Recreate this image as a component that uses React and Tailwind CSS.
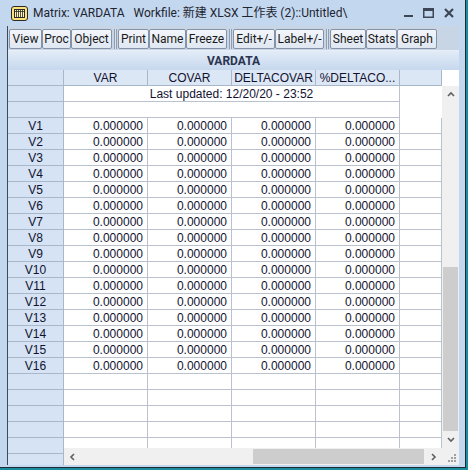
const GRID = 'border-[#b9c2cd]';

const colWidths = ['w-[84px]', 'w-[84px]', 'w-[84px]', 'w-[84px]'];

const MatrixIcon = () => (
  <svg width="17" height="15" viewBox="0 0 17 15" className="shrink-0">
    <rect x="0.5" y="0.5" width="16" height="14" rx="2.5" fill="#fbe27a" stroke="#2a2a2a" />
    <rect x="3.5" y="3.5" width="10" height="8" fill="#fff3b8" stroke="#2a2a2a" />
    <path d="M5.5 4v7M7.5 4v7M9.5 4v7M11.5 4v7M4 5.5h9" stroke="#2a2a2a" strokeWidth="0.8" />
  </svg>
);

const ToolButton = ({ label, w }) => (
  <div
    className={`${w} h-[20px] shrink-0 flex items-center justify-center border border-[#8593a8] rounded-[2px] bg-gradient-to-b from-[#f3f6fb] to-[#dfe7f2] text-[12px] text-[#1a1a1a]`}
  >
    {label}
  </div>
);

const Sep = () => (
  <div className="w-[6px] h-[20px] shrink-0 flex justify-center">
    <div className="w-[3px] h-full border-x border-[#8f9db0] bg-[#d9e2ee]" />
  </div>
);

const Chevron = ({ dir }) => {
  const pts = {
    up: '1,5 4,2 7,5',
    down: '1,2 4,5 7,2',
    left: '5,1 2,4 5,7',
    right: '2,1 5,4 2,7',
  }[dir];
  return (
    <svg width="8" height="8" viewBox="0 0 8 8">
      <polyline points={pts} fill="none" stroke="#606060" strokeWidth="1.6" />
    </svg>
  );
};

const RowHead = ({ children }) => (
  <div className="w-[56px] h-[16px] shrink-0 flex items-center justify-center bg-[#d5e3f4] border-r border-b border-[#a9b7c9]">
    {children}
  </div>
);

// merged row spanning the four data columns (used for the header notes)
const SpanRow = ({ children }) => (
  <div className="flex h-[16px] shrink-0">
    <RowHead />
    <div className={`w-[336px] h-[16px] shrink-0 flex items-center justify-center border-r border-b ${GRID}`}>
      {children}
    </div>
  </div>
);

const DataRow = ({ label, values }) => (
  <div className="flex h-[16px] shrink-0">
    <RowHead>{label}</RowHead>
    {colWidths.map((w, i) => (
      <div key={i} className={`${w} h-[16px] shrink-0 flex items-center justify-end pr-[4px] border-r border-b ${GRID}`}>
        {values ? values[i] : ''}
      </div>
    ))}
    <div className={`w-[42px] h-[16px] shrink-0 border-r border-b ${GRID}`} />
  </div>
);

export default function App() {
  const vars = Array.from({ length: 16 }, (_, i) => `V${i + 1}`);
  const zeros = ['0.000000', '0.000000', '0.000000', '0.000000'];

  return (
    <div className="w-[470px] h-[472px] bg-white overflow-hidden">
      <div className="w-[468px] h-[470px] bg-[#c3d8ef] border-r-2 border-b-2 border-[#1c8d9c] shadow-[inset_-1px_-1px_0_#1d2a36] flex flex-col">
        {/* Title bar */}
        <div className="h-[26px] shrink-0 flex items-center pl-[11px] pr-[12px] font-['Roboto','Noto_Sans_CJK_SC',sans-serif] text-[12px] text-[#1e2430]">
          <MatrixIcon />
          <span className="ml-[5px]">Matrix: VARDATA</span>
          <span className="ml-[9px]">Workfile: 新建 XLSX 工作表 (2)::Untitled\</span>
          <div className="ml-auto flex items-center gap-[10px]">
            <svg width="9" height="10" viewBox="0 0 9 10">
              <rect x="0" y="7" width="9" height="2" fill="#3c4656" />
            </svg>
            <svg width="11" height="10" viewBox="0 0 11 10">
              <rect x="0.75" y="0.75" width="9.5" height="8.5" fill="none" stroke="#3c4656" strokeWidth="1.5" />
              <rect x="0" y="0" width="11" height="3" fill="#3c4656" />
            </svg>
            <svg width="10" height="10" viewBox="0 0 10 10">
              <path d="M1 1L9 9M9 1L1 9" stroke="#3c4656" strokeWidth="2.2" />
            </svg>
          </div>
        </div>

        {/* Content panel */}
        <div className="ml-[7px] w-[452px] flex-1 min-h-0 flex flex-col border-l border-[#3d4a5c] bg-white font-['Liberation_Sans',Arial,sans-serif] text-[12px] text-[#121230]">
          {/* Toolbar */}
          <div className="h-[24px] shrink-0 bg-[#c8d5e4] flex items-start pt-[3px] pl-[1px] font-['Roboto',sans-serif]">
            <ToolButton label="View" w="w-[33px]" />
            <ToolButton label="Proc" w="w-[29px]" />
            <ToolButton label="Object" w="w-[41px]" />
            <Sep />
            <ToolButton label="Print" w="w-[31px]" />
            <ToolButton label="Name" w="w-[37px]" />
            <ToolButton label="Freeze" w="w-[41px]" />
            <Sep />
            <ToolButton label="Edit+/-" w="w-[42px]" />
            <ToolButton label="Label+/-" w="w-[49px]" />
            <Sep />
            <ToolButton label="Sheet" w="w-[36px]" />
            <ToolButton label="Stats" w="w-[31px]" />
            <ToolButton label="Graph" w="w-[40px]" />
          </div>

          {/* Title band */}
          <div className="h-[20px] shrink-0 border-t border-[#e8eef7] bg-gradient-to-b from-[#e3ecf7] to-[#c6d8ee] flex items-center justify-center font-['Roboto',sans-serif] font-bold text-[12px] text-[#2a3550]">
            VARDATA
          </div>

          {/* Grid */}
          <div className="relative flex-1 min-h-0 overflow-hidden">
            <div className="flex h-[16px]">
              <RowHead />
              {['VAR', 'COVAR', 'DELTACOVAR', '%DELTACO...'].map((h, i) => (
                <div key={h} className={`${colWidths[i]} h-[16px] shrink-0 flex items-center justify-center bg-[#dce7f5] border-r border-b border-[#a9b7c9]`}>
                  {h}
                </div>
              ))}
              <div className="w-[42px] h-[16px] shrink-0 bg-[#dce7f5] border-r border-b border-[#a9b7c9]" />
            </div>

            <SpanRow>Last updated: 12/20/20 - 23:52</SpanRow>
            <SpanRow />
            {vars.map((v) => (
              <DataRow key={v} label={v} values={zeros} />
            ))}
            {Array.from({ length: 6 }, (_, i) => (
              <DataRow key={`e${i}`} />
            ))}

            {/* Vertical scrollbar */}
            <div className="absolute right-0 top-[16px] bottom-[17px] w-[17px] bg-[#f0f0f0] flex flex-col items-center">
              <div className="h-[17px] flex items-center justify-center">
                <Chevron dir="up" />
              </div>
              <div className="mt-[164px] w-[15px] h-[164px] bg-[#cdcdcd]" />
              <div className="mt-auto h-[17px] flex items-center justify-center">
                <Chevron dir="down" />
              </div>
            </div>

            {/* Horizontal scrollbar */}
            <div className="absolute left-[56px] right-[17px] bottom-0 h-[17px] bg-[#f0f0f0] flex items-center">
              <div className="w-[17px] flex items-center justify-center">
                <Chevron dir="left" />
              </div>
              <div className="ml-[172px] w-[171px] h-[15px] bg-[#cdcdcd]" />
              <div className="ml-auto w-[17px] flex items-center justify-center">
                <Chevron dir="right" />
              </div>
            </div>

            {/* Size grip corner */}
            <div className="absolute right-0 bottom-0 w-[17px] h-[17px] bg-[#f0f0f0]">
              <svg width="17" height="17" viewBox="0 0 17 17">
                {[[12, 6], [12, 9], [9, 9], [12, 12], [9, 12], [6, 12]].map(([x, y]) => (
                  <rect key={`${x}-${y}`} x={x} y={y} width="2" height="2" fill="#a0a0a0" />
                ))}
              </svg>
            </div>
          </div>
        </div>
        <div className="h-[3px] shrink-0" />
      </div>
    </div>
  );
}
